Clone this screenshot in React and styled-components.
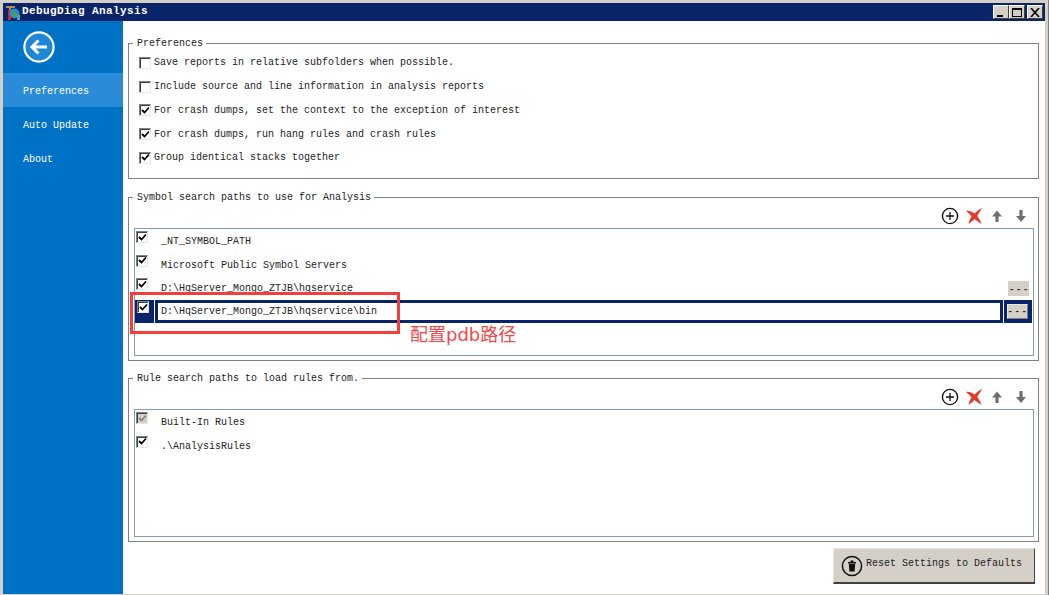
import React from "react";
import styled, { createGlobalStyle } from "styled-components";

const Global = createGlobalStyle`
  html, body { margin: 0; padding: 0; background: #d4d0c8; }
  * { box-sizing: border-box; }
`;
const mono = `"Liberation Mono", "DejaVu Sans Mono", monospace`;

const Win = styled.div`
  width: 1049px; height: 595px; overflow: hidden; position: relative;
  padding: 3px 3px 1px 3px; display: flex; flex-direction: column;
  background: #d4d0c8; font: 10px/12px ${mono}; color: #222;
  border-right: 1px solid #808080;
`;
const TitleBar = styled.div`
  height: 18px; flex: none; background: #0a246a; color: #fff; display: flex; align-items: center;
  padding-left: 2px; font: bold 11px/14px "Liberation Mono", monospace;
`;
const AppIcon = styled.svg`width: 16px; height: 16px; flex: none; margin-right: 1px; margin-top: 1px;`;
const Title = styled.span`flex: 1; letter-spacing: .4px; padding-bottom: 2px;`;
const WinBtns = styled.div`display: flex; margin-right: 2px; gap: 0;`;
const WinBtn = styled.button`
  width: 16px; height: 14px; padding: 0; margin-left: ${p => p.$gap || 0}px; background: #d4d0c8; border: 1px solid; border-color: #fff #404040 #404040 #fff;
  display: flex; align-items: center; justify-content: center;
`;
const Body = styled.div`flex: 1; display: flex; min-height: 0; background: #fff;`;
const Side = styled.nav`width: 120px; flex: none; background: #0072c6; color: #fff; display: flex; flex-direction: column;`;
const Back = styled.div`height: 52px; padding: 10px 0 0 20px;`;
const NavItem = styled.div`
  height: 34px; padding: 3px 0 0 20px; display: flex; align-items: center;
  background: ${p => p.$active ? "#2a8bd9" : "transparent"}; color: #fff;
`;
const Main = styled.main`flex: 1; display: flex; flex-direction: column; padding: 16px 6px 0 5px; min-width: 0;`;
const Group = styled.fieldset`
  margin: 0 0 ${p => p.$mb}px; padding: 0; height: ${p => p.$h}px; border: 1px solid #808080; min-width: 0;
  position: relative; flex: none; display: block;
`;
const Legend = styled.legend`
  padding: 1px 3px 0 4px; margin-left: 4px; line-height: 12px; color: #222; letter-spacing: 0;
`;
const Options = styled.div`display: flex; flex-direction: column; padding: 1.5px 0 0 10px;`;
const OptRow = styled.label`height: 23.75px; display: flex; align-items: center; gap: 3px;`;
const Box = styled.span`
  width: 12px; height: 12px; flex: none; display: inline-flex; align-items: center; justify-content: center;
  margin-top: ${p => p.$inList ? 0 : -1}px;
  background: ${p => p.$disabled ? "#d4d0c8" : "#fff"};
  border: 1px solid; border-color: #808080 #e8e6e0 #e8e6e0 #808080;
  box-shadow: inset 1px 1px 0 #404040;
`;
const Tools = styled.div`height: 24px; display: flex; justify-content: flex-end; align-items: center; gap: 6px; padding: 0 8px 0 0;`;
const Tool = styled.svg`width: 18px; height: 18px; flex: none; margin-right: ${p => p.$mr || 0}px;`;
const List = styled.div`
  margin: 0 4px 0 5px; height: ${p => p.$h}px; border: 1px solid #7f9db9; background: #fff; display: flex; flex-direction: column;
`;
const PathRow = styled.div`
  height: 23.7px; flex: none; display: flex; align-items: flex-start; padding-left: 1px;
`;
const RowCheck = styled.div`width: 20px; height: 22px; flex: none; padding-top: 2px;`;
const RowText = styled.div`
  flex: 1; height: 22px; display: flex; align-items: flex-end; padding: 0 0 4px 5px; min-width: 0; margin-top: 1px;
  line-height: 12px;
`;
const Browse = styled.button`
  width: 21px; height: 15px; padding: 0 0 0 2px; margin: 5px 4px 0 0; border: 0; background: #d4d0c8; font: bold 9px/11px ${mono};
  color: #222; letter-spacing: 1.6px; white-space: pre; display: flex; align-items: flex-end; justify-content: center; flex: none; overflow: hidden;
`;
const SelRow = styled.div`height: 23px; flex: none; display: flex;`;
const SelCheck = styled.div`width: 19px; height: 23px; padding: 1px 0 0 2px; background: #0a246a; flex: none; margin-right: 1px;`;
const SelField = styled.div`
  flex: 1; height: 23px; min-width: 0; border: 3px solid #0a246a; display: flex; align-items: center; padding: 1px 0 0 3px; background: #fff;
  margin-right: 1px;
`;
const SelBrowseWrap = styled.div`width: 28px; height: 23px; flex: none; background: #0a246a; padding: 4px 3px; margin-right: 1px;`;
const SelBrowse = styled.button`
  width: 21px; height: 15px; padding: 0 0 0 1px; border: 1px solid; border-color: #e8e6e0 #808080 #808080 #e8e6e0; background: #d4d0c8; color: #222;
  font: bold 9px/11px ${mono}; letter-spacing: 1.6px; white-space: pre; display: flex; align-items: flex-end; justify-content: center; overflow: hidden;
`;
const Footer = styled.div`display: flex; justify-content: flex-end; padding: 0 4px 0 0;`;
const ResetBtn = styled.button`
  width: 202px; height: 36px; display: flex; align-items: flex-start; gap: 3px; padding: 9px 0 0 7px; background: #d4d0c8; color: #222; font: 10px/12px ${mono};
  border: 0; border-right: 1px solid #404040; border-bottom: 2px solid #404040; border-top: 1px solid #e8e6e0; border-left: 1px solid #e8e6e0;
`;
const TrashIcon = styled.svg`width: 22px; height: 22px; flex: none; margin-top: -3px;`;
const Note = styled.div`
  position: absolute; left: 130px; top: 292px; width: 270px; height: 42px; border: 3px solid #f73c3c; pointer-events: none;
`;
const NoteText = styled.div`
  position: absolute; left: 410px; top: 323px; color: #f4484a; font: 18px/24px "DejaVu Sans", "Noto Sans CJK SC", sans-serif; white-space: nowrap;
`;

const Check = ({ disabled, checked = true, inList }) => (
  <Box $disabled={disabled} $inList={inList}>
    {checked && (
      <svg width="9" height="9" viewBox="0 0 9 9">
        <path d="M1 4 L3.5 6.5 L8 1.5" fill="none" stroke={disabled ? "#888" : "#000"} strokeWidth="1.8" />
      </svg>
    )}
  </Box>
);

const Toolbar = () => (
  <Tools>
    <Tool viewBox="0 0 18 18">
      <circle cx="9" cy="9" r="7.6" fill="none" stroke="#111" strokeWidth="1.4" />
      <path d="M9 5v8M5 9h8" stroke="#111" strokeWidth="1.3" />
    </Tool>
    <Tool viewBox="0 0 18 18" $mr={-1}>
      <path d="M1 4 C4 3.5 6.5 4.5 9.5 6.5 C12 4 14.5 2 17 1 C15.5 4 13.5 6.5 12.3 9 C14 11.5 15.5 14 16.5 17 C14 15.5 11.5 13.5 9.5 12 C7.5 14 5.5 15.5 3.5 17 C4 14.5 5 11.5 6.5 9.5 C5 7.5 3 5.5 1 4Z" fill="#dc3c2c" />
    </Tool>
    <Tool viewBox="0 0 18 18">
      <path d="M9 3.5 L14 9.5 H10.6 V15 H7.4 V9.5 H4Z" fill="#6f6f6f" />
    </Tool>
    <Tool viewBox="0 0 18 18">
      <path d="M9 15 L14 9 H10.6 V3 H7.4 V9 H4Z" fill="#6f6f6f" />
    </Tool>
  </Tools>
);

const PathItem = ({ text, disabled, browse }) => (
  <PathRow>
    <RowCheck><Check disabled={disabled} inList /></RowCheck>
    <RowText>{text}</RowText>
    {browse && <Browse>---</Browse>}
  </PathRow>
);

export default function App() {
  return (
    <Win>
      <Global />
      <TitleBar>
        <AppIcon viewBox="0 0 16 16">
          <path d="M1 1h9v2H6v2H4V3H1z" fill="#b09060" />
          <rect x="3" y="5" width="3" height="10" fill="#d22" />
          <circle cx="9.5" cy="8.5" r="5" fill="#2a8fd0" />
          <path d="M7 6l4 .5 .5 4-3 2.5z" fill="#3fa34d" />
          <rect x="12" y="10" width="3" height="5" fill="#5aa0a0" />
        </AppIcon>
        <Title>DebugDiag Analysis</Title>
        <WinBtns>
          <WinBtn><svg width="10" height="9"><rect x="1" y="7" width="6" height="2" fill="#000" /></svg></WinBtn>
          <WinBtn><svg width="10" height="9"><rect x=".5" y=".5" width="9" height="8" fill="none" stroke="#000" /><rect y="0" width="10" height="2" fill="#000" /></svg></WinBtn>
          <WinBtn $gap={2}><svg width="10" height="9"><path d="M1 0l8 9M9 0L1 9" stroke="#000" strokeWidth="1.6" /></svg></WinBtn>
        </WinBtns>
      </TitleBar>
      <Body>
        <Side>
          <Back>
            <svg width="32" height="32" viewBox="0 0 32 32">
              <circle cx="16" cy="16" r="14.6" fill="#1f86d6" stroke="#fff" strokeWidth="2.2" />
              <path d="M24 16H10M15.5 9.5L9 16l6.5 6.5" fill="none" stroke="#fff" strokeWidth="3" />
            </svg>
          </Back>
          <NavItem $active>Preferences</NavItem>
          <NavItem>Auto Update</NavItem>
          <NavItem>About</NavItem>
        </Side>
        <Main>
          <Group $h={142} $mb={12}>
            <Legend>Preferences</Legend>
            <Options>
              <OptRow><Check checked={false} />Save reports in relative subfolders when possible.</OptRow>
              <OptRow><Check checked={false} />Include source and line information in analysis reports</OptRow>
              <OptRow><Check />For crash dumps, set the context to the exception of interest</OptRow>
              <OptRow><Check />For crash dumps, run hang rules and crash rules</OptRow>
              <OptRow><Check />Group identical stacks together</OptRow>
            </Options>
          </Group>
          <Group $h={170} $mb={11}>
            <Legend>Symbol search paths to use for Analysis</Legend>
            <Toolbar />
            <List $h={128}>
              <PathItem text="_NT_SYMBOL_PATH" />
              <PathItem text="Microsoft Public Symbol Servers" />
              <PathItem text="D:\HqServer_Mongo_ZTJB\hqservice" browse />
              <SelRow>
                <SelCheck><Check inList /></SelCheck>
                <SelField>D:\HqServer_Mongo_ZTJB\hqservice\bin</SelField>
                <SelBrowseWrap><SelBrowse>---</SelBrowse></SelBrowseWrap>
              </SelRow>
            </List>
          </Group>
          <Group $h={170} $mb={6}>
            <Legend>Rule search paths to load rules from.</Legend>
            <Toolbar />
            <List $h={128}>
              <PathItem text="Built-In Rules" disabled />
              <PathItem text=".\AnalysisRules" />
            </List>
          </Group>
          <Footer>
            <ResetBtn>
              <TrashIcon viewBox="0 0 22 22">
                <circle cx="11" cy="11" r="9.6" fill="none" stroke="#111" strokeWidth="1.5" />
                <path d="M7 7h8v1.4H7zM9.5 5.5h3V7h-3zM7.8 9h6.4l-.6 7.5H8.4z" fill="#111" />
              </TrashIcon>
              Reset Settings to Defaults
            </ResetBtn>
          </Footer>
        </Main>
      </Body>
      <Note />
      <NoteText>配置pdb路径</NoteText>
    </Win>
  );
}
